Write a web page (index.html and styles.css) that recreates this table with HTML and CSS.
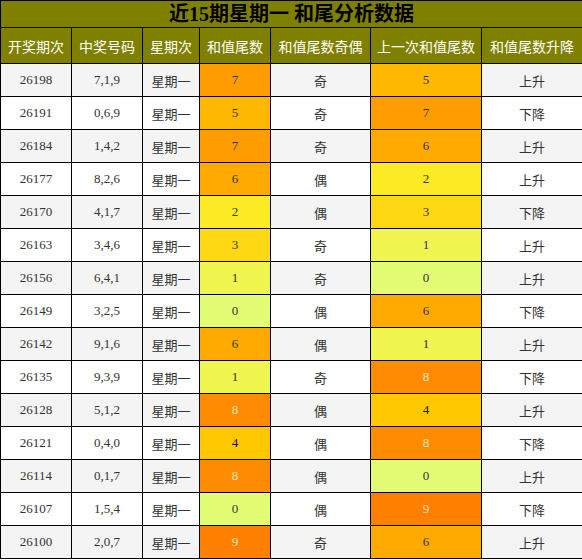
FILE: index.html
```html
<!DOCTYPE html>
<html lang="zh-CN">
<head>
    <meta charset="UTF-8">
    <meta name="viewport" content="width=device-width, initial-scale=1.0">
    <title>和尾分析</title>
    <link rel="stylesheet" href="styles.css">
</head>
<body>
    <table class="tabela">
        <colgroup>
            <col class="c1"><col class="c2"><col class="c3"><col class="c4"><col class="c5"><col class="c6"><col class="c7">
        </colgroup>
        <tr class="titulo"><th colspan="7">近15期星期一 和尾分析数据</th></tr>
        <tr class="cab">
            <th>开奖期次</th><th>中奖号码</th><th>星期次</th><th>和值尾数</th><th>和值尾数奇偶</th><th>上一次和值尾数</th><th>和值尾数升降</th>
        </tr>
        <tr><td>26198</td><td>7,1,9</td><td>星期一</td><td class="d7">7</td><td>奇</td><td class="d5">5</td><td>上升</td></tr>
        <tr><td>26191</td><td>0,6,9</td><td>星期一</td><td class="d5">5</td><td>奇</td><td class="d7">7</td><td>下降</td></tr>
        <tr><td>26184</td><td>1,4,2</td><td>星期一</td><td class="d7">7</td><td>奇</td><td class="d6">6</td><td>上升</td></tr>
        <tr><td>26177</td><td>8,2,6</td><td>星期一</td><td class="d6">6</td><td>偶</td><td class="d2">2</td><td>上升</td></tr>
        <tr><td>26170</td><td>4,1,7</td><td>星期一</td><td class="d2">2</td><td>偶</td><td class="d3">3</td><td>下降</td></tr>
        <tr><td>26163</td><td>3,4,6</td><td>星期一</td><td class="d3">3</td><td>奇</td><td class="d1">1</td><td>上升</td></tr>
        <tr><td>26156</td><td>6,4,1</td><td>星期一</td><td class="d1">1</td><td>奇</td><td class="d0">0</td><td>上升</td></tr>
        <tr><td>26149</td><td>3,2,5</td><td>星期一</td><td class="d0">0</td><td>偶</td><td class="d6">6</td><td>下降</td></tr>
        <tr><td>26142</td><td>9,1,6</td><td>星期一</td><td class="d6">6</td><td>偶</td><td class="d1">1</td><td>上升</td></tr>
        <tr><td>26135</td><td>9,3,9</td><td>星期一</td><td class="d1">1</td><td>奇</td><td class="d8">8</td><td>下降</td></tr>
        <tr><td>26128</td><td>5,1,2</td><td>星期一</td><td class="d8">8</td><td>偶</td><td class="d4">4</td><td>上升</td></tr>
        <tr><td>26121</td><td>0,4,0</td><td>星期一</td><td class="d4">4</td><td>偶</td><td class="d8">8</td><td>下降</td></tr>
        <tr><td>26114</td><td>0,1,7</td><td>星期一</td><td class="d8">8</td><td>偶</td><td class="d0">0</td><td>上升</td></tr>
        <tr><td>26107</td><td>1,5,4</td><td>星期一</td><td class="d0">0</td><td>偶</td><td class="d9">9</td><td>下降</td></tr>
        <tr><td>26100</td><td>2,0,7</td><td>星期一</td><td class="d9">9</td><td>奇</td><td class="d6">6</td><td>上升</td></tr>
    </table>
</body>
</html>
```

FILE: styles.css
```css
body {
    margin: 0;
    background: #fff;
    font-family: "Liberation Serif", "Noto Sans CJK SC", serif;
}

.tabela {
    width: 582px;
    border-collapse: collapse;
    table-layout: fixed;
}

.c1 { width: 71px; }
.c2 { width: 71px; }
.c3 { width: 57px; }
.c4 { width: 71px; }
.c5 { width: 100px; }
.c6 { width: 111px; }
.c7 { width: 101px; }

.tabela th,
.tabela td {
    border: 1px solid #000;
    text-align: center;
    padding: 0;
}

.titulo th {
    height: 26px;
    line-height: 24px;
    background: #808000;
    color: #000;
    font-size: 20px;
    font-weight: bold;
}

.cab th {
    height: 35px;
    background: #808000;
    color: #fff;
    font-size: 14px;
    font-weight: normal;
}

.tabela td {
    height: 32px;
    font-size: 13px;
    color: #333;
}

.tabela tr:nth-child(odd) td {
    background: #f4f4f4;
}

.tabela tr:nth-child(even) td {
    background: #fff;
}

.tabela tr td.d0 { background: #e2fd74; }
.tabela tr td.d1 { background: #f0f550; }
.tabela tr td.d2 { background: #fcea25; }
.tabela tr td.d3 { background: #ffd814; }
.tabela tr td.d4 { background: #ffc800; color: #111; }
.tabela tr td.d5 { background: #ffb800; }
.tabela tr td.d6 { background: #ffaa00; }
.tabela tr td.d7 { background: #ff9c00; }
.tabela tr td.d8 { background: #ff8c00; color: #ffe2b8; }
.tabela tr td.d9 { background: #ff8000; color: #ffe2b8; }
```
